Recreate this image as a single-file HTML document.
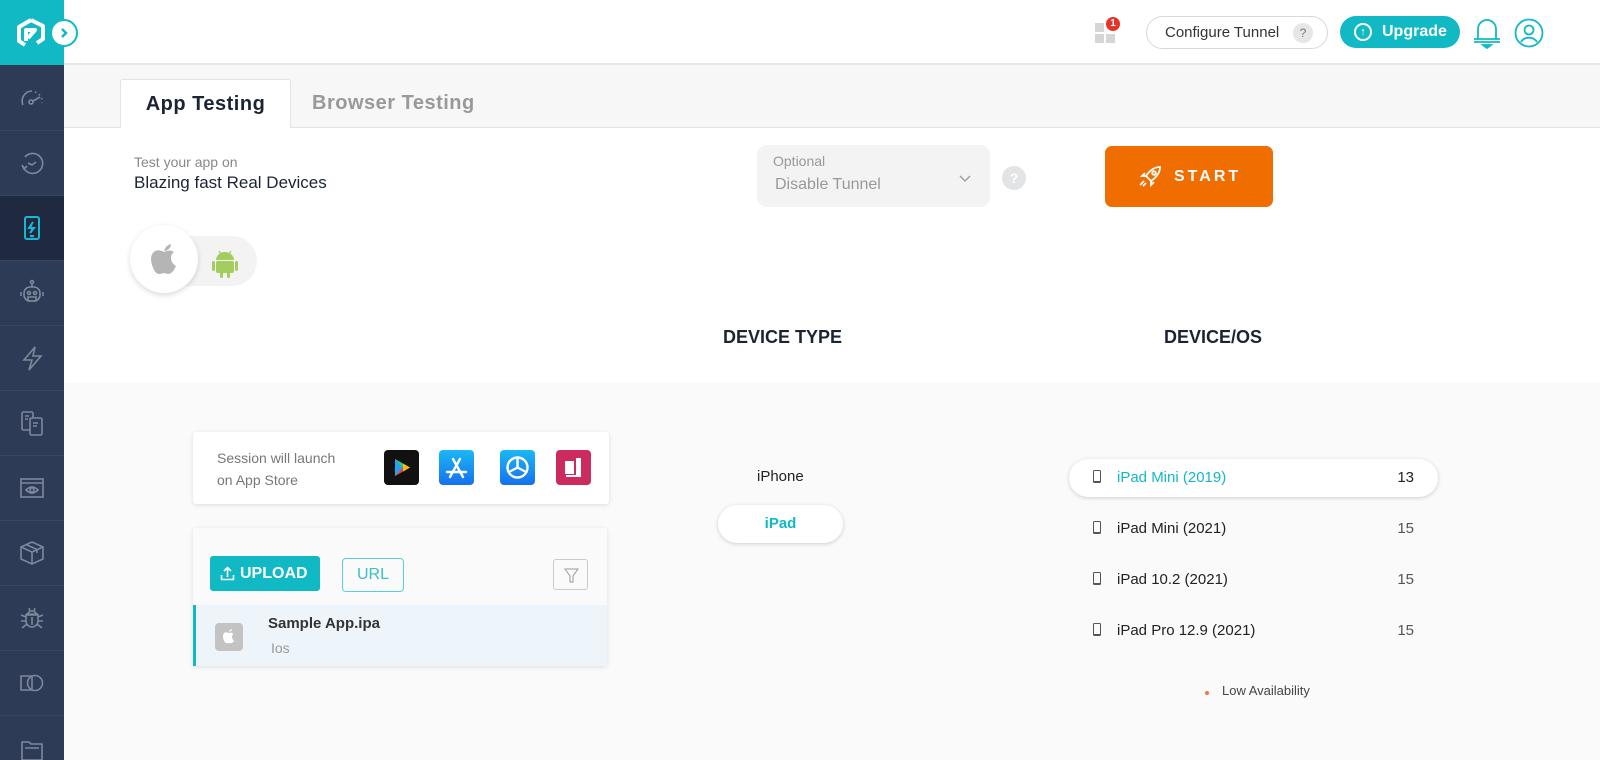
<!DOCTYPE html>
<html><head><meta charset="utf-8"><style>
*{box-sizing:border-box;margin:0;padding:0}
html,body{width:1600px;height:760px;overflow:hidden}
body{font-family:"Liberation Sans",sans-serif;background:#fafafa;position:relative;color:#222}
.abs{position:absolute}
#sb{left:0;top:0;width:64px;height:760px;background:#2e3b56}
#logo{left:0;top:0;width:64px;height:65px;background:#10b9c4}
.si{position:absolute;left:0;width:64px;height:65px;border-bottom:1px solid #3a4763;display:flex;align-items:center;justify-content:center}
.si svg{width:30px;height:30px;fill:none;stroke:#7d889c;stroke-width:1.6}
#top{left:64px;top:0;width:1536px;height:65px;background:#fff;border-bottom:2px solid #e6e7ea}
#tabs{left:64px;top:65px;width:1536px;height:63px;background:#f7f7f7;border-bottom:1px solid #e3e3e3}
#white{left:64px;top:128px;width:1536px;height:255px;background:#fff}
.card{background:#fff;box-shadow:0 1px 5px rgba(0,0,0,.12);border-radius:3px}
.ph{display:inline-block;width:8px;height:13px;border:1.3px solid #555;border-radius:1.5px;vertical-align:-1px;margin-right:16px;border-bottom-width:2.5px}
.row{position:relative;height:51px}
.row span.v{position:absolute;right:-6px;top:0;color:#555}
</style></head><body>
<div id="sb" class="abs">
<div id="logo" class="abs">
<svg class="abs" style="left:15px;top:17px" width="32" height="32" viewBox="0 0 32 32" fill="none" stroke="#fff" stroke-width="4" stroke-linejoin="round"><path d="M16 3 L28 9 V22 L22 26 M10 28 L4 24 V10 L16 3"/><path d="M11 24 V13 H20 L13 21"/></svg>
</div>
<div class="si" style="top:66px"><svg viewBox="0 0 30 30"><path d="M6 22 A10 10 0 0 1 15 8"/><path d="M18 9 A10 10 0 0 1 25 20" stroke-dasharray="1.5 3"/><circle cx="14" cy="19" r="2"/><path d="M16 18 L23 14"/></svg></div>
<div class="si" style="top:131px"><svg viewBox="0 0 30 30"><path d="M6 18 A10 10 0 1 0 8 9"/><path d="M5 17 L7 21 L10 18"/><path d="M11 15 L15 17 L19 14"/></svg></div>
<div class="si" style="top:196px;background:#1f2a40"><svg viewBox="0 0 30 30" style="stroke:#1ab6d6;stroke-width:2"><rect x="8" y="4" width="14" height="22" rx="2"/><path d="M16 9 L12 15 H17 L13 20" fill="#1ab6d6"/><path d="M13 23 H17"/></svg></div>
<div class="si" style="top:261px"><svg viewBox="0 0 30 30"><circle cx="15" cy="4" r="1.5"/><path d="M15 6 V9"/><rect x="7" y="9" width="16" height="14" rx="6"/><circle cx="12" cy="15" r="1.5"/><circle cx="18" cy="15" r="1.5"/><path d="M11 19 H19 V23 H11Z M4 14 V18 M26 14 V18"/></svg></div>
<div class="si" style="top:326px"><svg viewBox="0 0 30 30"><path d="M18 4 L7 17 H15 L12 27 L24 13 H16 Z"/></svg></div>
<div class="si" style="top:391px"><svg viewBox="0 0 30 30"><rect x="5" y="4" width="11" height="18" rx="1.5"/><rect x="13" y="10" width="12" height="17" rx="1.5" fill="#2e3b56"/><path d="M8 8 H12 M8 11 H11 M16 15 H21 M16 18 H20"/></svg></div>
<div class="si" style="top:456px"><svg viewBox="0 0 30 30"><rect x="4" y="6" width="22" height="18"/><path d="M4 10 H26"/><path d="M9 17 Q15 11 21 17 Q15 23 9 17Z"/><circle cx="15" cy="17" r="2"/></svg></div>
<div class="si" style="top:521px"><svg viewBox="0 0 30 30"><path d="M15 4 L26 9 V21 L15 26 L4 21 V9Z M4 9 L15 14 L26 9 M15 14 V26 M9 6.5 L20 11.5 V15"/></svg></div>
<div class="si" style="top:586px"><svg viewBox="0 0 30 30"><path d="M12 5 L13 8 M18 5 L17 8"/><path d="M10 11 Q15 5 20 11 Z"/><path d="M9 12 H21 V18 A6 6 0 0 1 9 18Z M15 14 V22 M4 12 L9 14 M26 12 L21 14 M4 18 H9 M26 18 H21 M5 25 L10 21 M25 25 L20 21"/></svg></div>
<div class="si" style="top:651px"><svg viewBox="0 0 30 30"><path d="M4 8 H15 V22 H4Z"/><circle cx="18" cy="15" r="7.5"/></svg></div>
<div class="si" style="top:716px;border:0"><svg viewBox="0 0 30 30"><path d="M5 8 H12 L14 10 H25 V26 H5Z M8 14 H22"/></svg></div>
</div>

<div id="top" class="abs">
<div class="abs" style="left:1031px;top:21px;width:20px;height:22px">
<div class="abs" style="left:0;top:2px;width:9px;height:9px;background:#d6d6d6"></div><div class="abs" style="left:0;top:13px;width:9px;height:9px;background:#d6d6d6"></div><div class="abs" style="left:11px;top:13px;width:9px;height:9px;background:#d6d6d6"></div>
<div class="abs" style="left:11px;top:-4px;width:14px;height:14px;border-radius:50%;background:#e8332a;color:#fff;font-size:10px;font-weight:bold;text-align:center;line-height:14px">1</div></div>
<div class="abs" style="left:1082px;top:16px;width:182px;height:33px;border:1px solid #d8d8d8;border-radius:17px;font-size:15px;color:#333;line-height:31px;padding-left:18px">Configure Tunnel<span class="abs" style="right:14px;top:6px;width:20px;height:20px;border-radius:50%;background:#e6e6e6;color:#777;font-size:12px;line-height:20px;text-align:center">?</span></div>
<div class="abs" style="left:1276px;top:16px;width:120px;height:32px;border-radius:16px;background:#10b9c4;color:#fff;font-size:16px;font-weight:bold;line-height:32px;padding-left:42px">Upgrade<span class="abs" style="left:14px;top:7px;width:18px;height:18px;border:2px solid #fff;border-radius:50%;font-size:11px;line-height:14px;text-align:center">↑</span></div>
<svg class="abs" style="left:1408px;top:17px" width="30" height="32" viewBox="0 0 30 32" fill="none" stroke="#10b9c4" stroke-width="1.8"><path d="M6 22 V12 A9 9 0 0 1 24 12 V22 M2 22 H28 M2 25 H28"/><path d="M11 28 H19 L15 31Z" fill="#10b9c4"/></svg>
<svg class="abs" style="left:1450px;top:18px" width="30" height="30" viewBox="0 0 30 30" fill="none" stroke="#10b9c4" stroke-width="1.8"><circle cx="15" cy="15" r="13.5"/><circle cx="15" cy="12" r="4.5"/><path d="M7 24 A9 8 0 0 1 23 24"/></svg>
</div>
<div class="abs" style="left:50px;top:19px;width:28px;height:28px;border-radius:50%;background:#fff;border:2px solid #10b9c4;display:flex;align-items:center;justify-content:center;z-index:5"><svg width="10" height="12" viewBox="0 0 10 12"><path d="M3 2 L7 6 L3 10" stroke="#10b9c4" stroke-width="2.5" fill="none"/></svg></div>

<div id="tabs" class="abs">
<div class="abs" style="left:56px;top:14px;width:171px;height:50px;background:#fff;border:1px solid #e3e3e3;border-bottom:0;border-radius:3px 3px 0 0;font-size:20px;font-weight:bold;color:#1c2433;text-align:center;line-height:48px;letter-spacing:.5px">App Testing</div>
<div class="abs" style="left:248px;top:14px;font-size:20px;font-weight:bold;color:#999;line-height:48px;letter-spacing:.5px">Browser Testing</div>
</div>

<div id="white" class="abs">
<div class="abs" style="left:70px;top:26px;font-size:14px;color:#888">Test your app on</div>
<div class="abs" style="left:70px;top:45px;font-size:17px;color:#1c2433">Blazing fast Real Devices</div>
<div class="abs" style="left:693px;top:17px;width:233px;height:62px;border-radius:10px;background:#f3f3f3">
<div class="abs" style="left:16px;top:8px;font-size:14px;color:#999">Optional</div>
<div class="abs" style="left:18px;top:31px;font-size:16px;color:#999">Disable Tunnel</div>
<svg class="abs" style="left:202px;top:30px" width="12" height="8" viewBox="0 0 12 8"><path d="M1 1 L6 6 L11 1" stroke="#999" fill="none" stroke-width="1.3"/></svg></div>
<div class="abs" style="left:938px;top:38px;width:24px;height:24px;border-radius:50%;background:#e3e4e6;color:#fff;font-weight:bold;font-size:14px;text-align:center;line-height:24px">?</div>
<div class="abs" style="left:1041px;top:18px;width:168px;height:61px;border-radius:7px;background:#f06d00;color:#fff;font-weight:bold;font-size:16px;letter-spacing:3px;line-height:61px;padding-left:69px">START
<svg class="abs" style="left:33px;top:19px" width="24" height="24" viewBox="0 0 24 24" fill="none" stroke="#fff" stroke-width="1.8"><path d="M22 2 Q14 2 8 11 L13 16 Q22 10 22 2Z M8 11 L4 11 L7 8 M13 16 L13 20 L16 17"/><circle cx="16" cy="8" r="1.8"/><path d="M6 16 L2 20 M8 18 L5 21"/></svg></div>
<div class="abs" style="left:67px;top:108px;width:126px;height:50px;border-radius:25px;background:#f3f3f3"></div>
<div class="abs" style="left:66px;top:97px;width:68px;height:68px;border-radius:50%;background:#fff;box-shadow:0 2px 6px rgba(0,0,0,.15)">
<svg class="abs" style="left:19px;top:17px" width="30" height="34" viewBox="0 0 30 34"><path d="M15 9 Q17 3 22 2 Q22 7 16 9Z" fill="#b5b5b5"/><path d="M15 10 Q10 7 6 9 Q0 13 3 23 Q6 32 10 32 Q12 32 15 31 Q18 32 20 32 Q24 31 27 24 Q22 21 22 16 Q22 12 25 10 Q21 7 15 10Z" fill="#b5b5b5"/></svg></div>
<svg class="abs" style="left:148px;top:120px" width="26" height="30" viewBox="0 0 26 30" fill="#a4cd5f"><path d="M4 12 A9 8 0 0 1 22 12Z"/><rect x="4" y="13" width="18" height="12" rx="2"/><rect x="0" y="13" width="3" height="10" rx="1.5"/><rect x="23" y="13" width="3" height="10" rx="1.5"/><rect x="8" y="24" width="3" height="6" rx="1.5"/><rect x="15" y="24" width="3" height="6" rx="1.5"/><path d="M7 3 L9 6 M19 3 L17 6" stroke="#a4cd5f" stroke-width="1.2"/></svg>
<div class="abs" style="left:659px;top:199px;font-size:18px;font-weight:bold;color:#1c2433">DEVICE TYPE</div>
<div class="abs" style="left:1100px;top:199px;font-size:18px;font-weight:bold;color:#1c2433">DEVICE/OS</div>
</div>

<div class="abs card" style="left:193px;top:432px;width:416px;height:72px">
<div class="abs" style="left:24px;top:15px;font-size:14px;color:#777;line-height:22px">Session will launch<br>on App Store</div>
<div class="abs" style="left:191px;top:18px;width:35px;height:35px;border-radius:4px;background:#111"><svg width="35" height="35" viewBox="0 0 35 35"><path d="M11 9 L26 17.5 L11 26Z" fill="#2ecf72"/><path d="M11 17.5 L26 17.5 L11 26Z" fill="#ea4335"/><path d="M19 13.5 L26 17.5 L19 21.5Z" fill="#fbbc04"/><path d="M11 9 L19 17.5 L11 26Z" fill="#28a0ee"/></svg></div>
<div class="abs" style="left:246px;top:18px;width:35px;height:35px;border-radius:4px;background:linear-gradient(#1bb8f6,#1670ed)"><svg width="35" height="35" viewBox="0 0 35 35" stroke="#fff" stroke-width="2.4" stroke-linecap="round" fill="none"><path d="M14 9 L24 27 M21 9 L11 27 M8 22 H27"/></svg></div>
<div class="abs" style="left:307px;top:18px;width:35px;height:35px;border-radius:4px;background:linear-gradient(#1bb8f6,#1670ed)"><svg width="35" height="35" viewBox="0 0 35 35" stroke="#fff" stroke-width="2.4" fill="none"><circle cx="17.5" cy="17.5" r="10"/><path d="M17.5 17.5 V8 M17.5 17.5 L9 22 M17.5 17.5 L26 22"/></svg></div>
<div class="abs" style="left:363px;top:18px;width:35px;height:35px;border-radius:4px;background:#cc2b5e"><svg width="35" height="35" viewBox="0 0 35 35" fill="#fff"><rect x="9" y="11" width="9" height="13"/><path d="M20 8 H25 V27 H10 V25 H20Z"/></svg></div>
</div>

<div class="abs card" style="left:193px;top:528px;width:414px;height:138px;background:#fafafa">
<div class="abs" style="left:17px;top:28px;width:110px;height:35px;border-radius:3px;background:#10b9c4;color:#fff;font-size:16px;font-weight:bold;line-height:35px;padding-left:30px">UPLOAD<svg class="abs" style="left:10px;top:10px" width="15" height="15" viewBox="0 0 15 15" fill="none" stroke="#fff" stroke-width="1.6"><path d="M7.5 11 V2 M4 5 L7.5 1.5 L11 5 M1.5 9 V13.5 H13.5 V9"/></svg></div>
<div class="abs" style="left:149px;top:30px;width:62px;height:34px;border:1px solid #5ccfd6;border-radius:4px;color:#3bbfc9;font-size:16px;text-align:center;line-height:32px">URL</div>
<div class="abs" style="left:360px;top:31px;width:35px;height:31px;border:1px solid #ccc;border-radius:3px"><svg width="35" height="31" viewBox="0 0 35 31"><path d="M11 9 H24 L19 16 V22 H16 V16Z" stroke="#999" fill="none"/></svg></div>
<div class="abs" style="left:0;top:77px;width:414px;height:61px;background:#edf4fa;border-left:3px solid #10b9c4">
<div class="abs" style="left:19px;top:18px;width:28px;height:28px;border-radius:4px;background:#c3c3c4"><svg width="28" height="28" viewBox="0 0 28 28"><path d="M14 9 Q15 6 17 6 Q17 8 14 9Z M14 10 Q11 8.5 9 10 Q7 13 9 18 Q11 21 14 20 Q17 21 19 18 Q17 16 17 14 Q17 12 18.5 11 Q16.5 9 14 10Z" fill="#fff"/></svg></div>
<div class="abs" style="left:72px;top:10px;font-size:15px;font-weight:bold;color:#333">Sample App.ipa</div>
<div class="abs" style="left:75px;top:35px;font-size:14px;color:#999">Ios</div>
</div></div>

<div class="abs" style="left:757px;top:468px;font-size:15px;color:#222">iPhone</div>
<div class="abs" style="left:718px;top:505px;width:125px;height:38px;border-radius:19px;background:#fff;box-shadow:0 1px 4px rgba(0,0,0,.18);color:#10b9c4;font-weight:bold;font-size:15px;text-align:center;line-height:38px">iPad</div>

<div class="abs" style="left:1069px;top:459px;width:369px;height:38px;border-radius:19px;background:#fff;box-shadow:0 1px 4px rgba(0,0,0,.18)"></div>
<div class="abs" style="left:1093px;top:466px;width:315px;font-size:15px;line-height:24px">
<div class="row" style="color:#10b9c4"><i class="ph"></i>iPad Mini (2019)<span class="v" style="color:#222">13</span></div>
<div class="row"><i class="ph"></i>iPad Mini (2021)<span class="v">15</span></div>
<div class="row"><i class="ph"></i>iPad 10.2 (2021)<span class="v">15</span></div>
<div class="row"><i class="ph"></i>iPad Pro 12.9 (2021)<span class="v">15</span></div>
</div>
<div class="abs" style="left:1205px;top:691px;width:4px;height:4px;border-radius:50%;background:#f07a3c"></div>
<div class="abs" style="left:1222px;top:683px;font-size:13px;color:#444">Low Availability</div>
</body></html>
